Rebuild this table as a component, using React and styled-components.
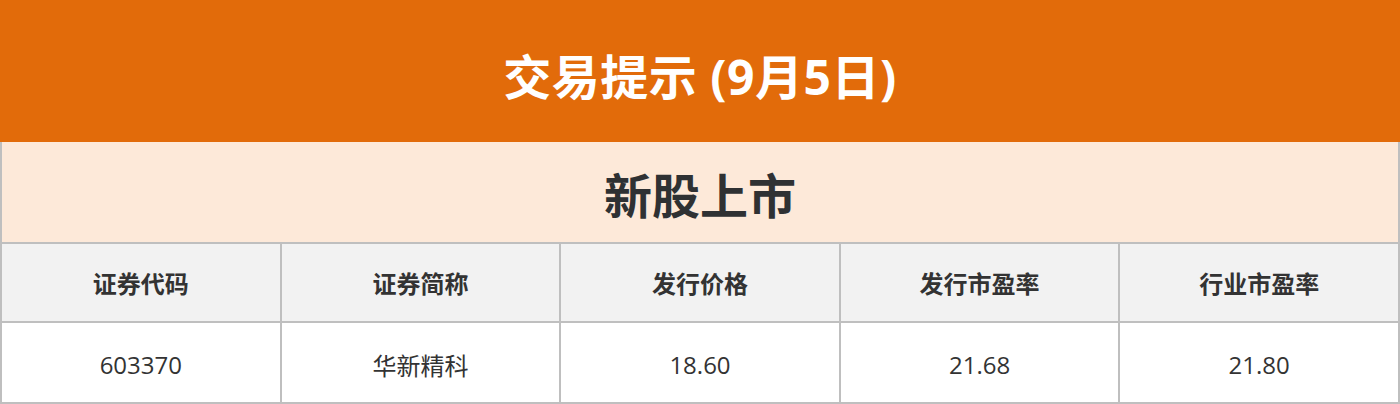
import styled, { createGlobalStyle } from "styled-components";

const GlobalStyle = createGlobalStyle`
  html, body {
    margin: 0;
    padding: 0;
    background: #ffffff;
  }
  body {
    font-family: "Open Sans", "Noto Sans CJK SC", sans-serif;
    color: #333333;
  }
`;

const Page = styled.div`
  width: 1400px;
`;

const Banner = styled.header`
  height: 142px;
  background-color: #e26b0a;
  display: flex;
  align-items: center;
  justify-content: center;
  padding-top: 6px;
  box-sizing: border-box;
`;

const BannerTitle = styled.h1`
  margin: 0;
  color: #ffffff;
  font-size: 48px;
  font-weight: 700;
  letter-spacing: 0.5px;
`;

const Section = styled.div`
  height: 102px;
  background-color: #fde9d9;
  border: 2px solid #bfbfbf;
  border-top: none;
  box-sizing: border-box;
  display: flex;
  align-items: center;
  justify-content: center;
  padding-top: 2px;
`;

const SectionTitle = styled.h2`
  margin: 0;
  font-size: 48px;
  font-weight: 700;
  color: #2f3133;
`;

const Grid = styled.div`
  display: grid;
  grid-template-columns: repeat(5, 1fr);
  border-left: 2px solid #bfbfbf;
`;

const Cell = styled.div`
  height: ${(p) => (p.$head ? "79px" : "81px")};
  box-sizing: border-box;
  border-right: 2px solid #bfbfbf;
  border-bottom: 2px solid #bfbfbf;
  background-color: ${(p) => (p.$head ? "#f2f2f2" : "#ffffff")};
  display: flex;
  align-items: center;
  justify-content: center;
  padding-top: ${(p) => (p.$head ? "0" : "3px")};
  font-size: 24px;
  font-weight: ${(p) => (p.$head ? 700 : 400)};
  color: #333333;
`;

const columns = ["证券代码", "证券简称", "发行价格", "发行市盈率", "行业市盈率"];
const rows = [["603370", "华新精科", "18.60", "21.68", "21.80"]];

export default function App() {
  return (
    <Page>
      <GlobalStyle />
      <Banner>
        <BannerTitle>交易提示 (9月5日)</BannerTitle>
      </Banner>
      <Section>
        <SectionTitle>新股上市</SectionTitle>
      </Section>
      <Grid>
        {columns.map((c) => (
          <Cell $head key={c}>
            {c}
          </Cell>
        ))}
        {rows.map((r) =>
          r.map((v, i) => <Cell key={i}>{v}</Cell>)
        )}
      </Grid>
    </Page>
  );
}
